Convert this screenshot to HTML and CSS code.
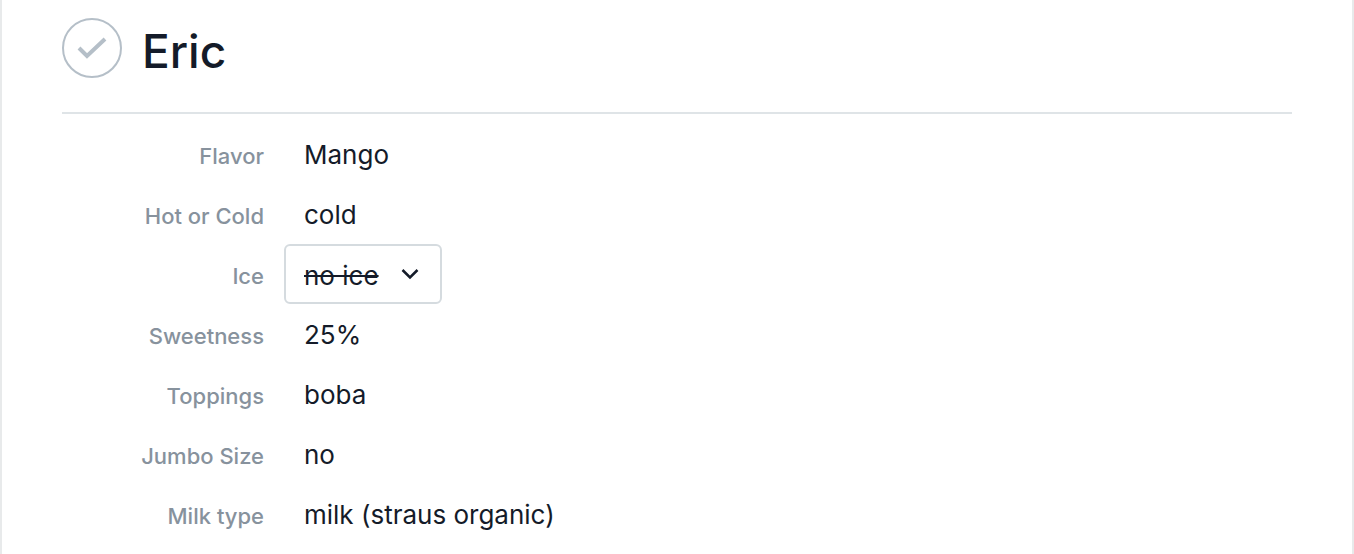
FILE: index.html
```
<!DOCTYPE html>
<html lang="en">
    <head>
        <title>Eric</title>
        <meta charset="utf-8" />
        <link rel="stylesheet" href="styles.css">
    </head>
    <body>
        <main class="order">
            <header class="order-head">
                <button type="button" class="done" aria-label="Mark as done">
                    <svg viewBox="0 0 56 56" aria-hidden="true">
                        <path d="M15 28 L23 36 L41 19" />
                    </svg>
                </button>
                <h1>Eric</h1>
            </header>

            <dl class="fields">
                <div class="field">
                    <dt>Flavor</dt>
                    <dd>Mango</dd>
                </div>
                <div class="field">
                    <dt>Hot or Cold</dt>
                    <dd>cold</dd>
                </div>
                <div class="field">
                    <dt><label for="ice">Ice</label></dt>
                    <dd class="picker">
                        <select id="ice">
                            <option selected>no ice</option>
                        </select>
                        <svg class="chevron" viewBox="0 0 20 12" aria-hidden="true">
                            <path d="M2.5 2 L10 9.5 L17.5 2" />
                        </svg>
                    </dd>
                </div>
                <div class="field">
                    <dt>Sweetness</dt>
                    <dd>25%</dd>
                </div>
                <div class="field">
                    <dt>Toppings</dt>
                    <dd>boba</dd>
                </div>
                <div class="field">
                    <dt>Jumbo Size</dt>
                    <dd>no</dd>
                </div>
                <div class="field">
                    <dt>Milk type</dt>
                    <dd>milk (straus organic)</dd>
                </div>
            </dl>
        </main>
    </body>
</html>
```
FILE: styles.css
```
* {
    box-sizing: border-box;
}
body {
    margin: 0;
    font-family: Inter, "Liberation Sans", sans-serif;
    font-size: 26px;
    color: #141b29;
    background-color: #fff;
}
.order {
    min-height: 100vh;
    padding: 0 60px;
    border: solid #e8eaeb;
    border-width: 0 2px;
}

/* Name and check mark */
.order-head {
    display: flex;
    align-items: flex-start;
    gap: 20px;
    padding: 18px 0 32px;
    border-bottom: 2px solid #dfe4e7;
}
.order-head h1 {
    margin: 0;
    padding-top: 4px;
    font-size: 46px;
    font-weight: 500;
    line-height: 58px;
}
.done {
    flex: none;
    width: 60px;
    height: 60px;
    padding: 0;
    border: 2px solid #b5bfc8;
    border-radius: 50%;
    background: none;
    cursor: pointer;
}
.done svg {
    display: block;
}
.done path {
    fill: none;
    stroke: #b5bfc8;
    stroke-width: 4;
}

/* Label / value rows */
.fields {
    margin: 0;
    padding-top: 10px;
}
.field {
    display: grid;
    grid-template-columns: 202px 1fr;
    grid-auto-rows: 60px;
    line-height: 62px;
}
.field dt {
    font-size: 22px;
    font-weight: 500;
    line-height: 64px;
    text-align: right;
    color: #87929d;
}
.field dd {
    margin: 0;
    padding-left: 40px;
}

/* Drop-down */
.field .picker {
    position: relative;
    justify-self: start;
    padding-left: 20px;
}
.picker select {
    display: block;
    width: 158px;
    height: 60px;
    padding: 2px 18px 0;
    border: 2px solid #d5dbdf;
    border-radius: 6px;
    appearance: none;
    background-color: #fff;
    color: inherit;
    font: inherit;
    line-height: normal;
    text-decoration: line-through;
    cursor: pointer;
}
.chevron {
    position: absolute;
    top: 24px;
    right: 22px;
    width: 20px;
    height: 12px;
    pointer-events: none;
}
.chevron path {
    fill: none;
    stroke: #141b29;
    stroke-width: 2.5;
}
```
